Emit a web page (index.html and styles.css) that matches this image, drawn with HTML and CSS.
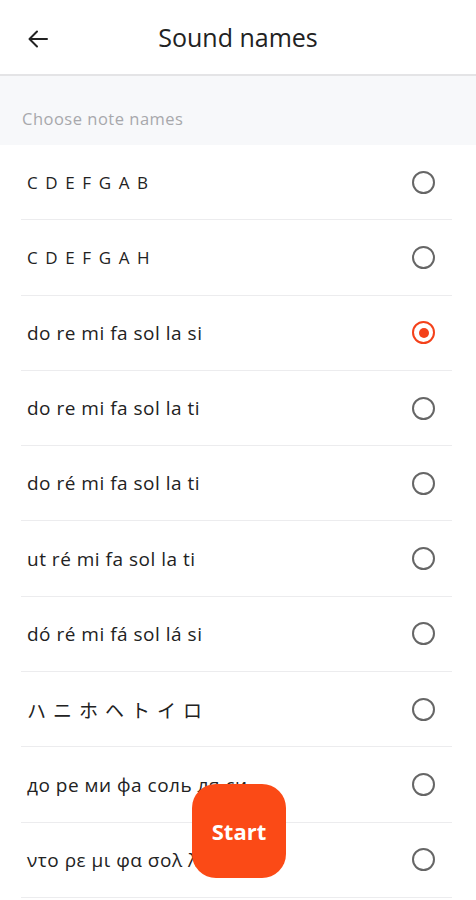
FILE: index.html
```html
<!DOCTYPE html>
<html lang="en">
<head>
<meta charset="utf-8">
<title>Sound names</title>
<link rel="stylesheet" href="styles.css">
</head>
<body>
<div class="screen">
  <header class="appbar">
    <button class="back" aria-label="Back">
      <svg width="24" height="24" viewBox="0 0 24 24"><path d="M21 12H4M11 4.5L3.5 12L11 19.5" fill="none" stroke="#222" stroke-width="2" stroke-linecap="round" stroke-linejoin="round"/></svg>
    </button>
    <h1 class="title">Sound names</h1>
  </header>
  <div class="section">Choose note names</div>
  <ul class="list">
    <li class="row"><span class="label spaced">C D E F G A B</span><span class="radio"></span></li>
    <li class="row"><span class="label spaced">C D E F G A H</span><span class="radio"></span></li>
    <li class="row"><span class="label">do re mi fa sol la si</span><span class="radio on"></span></li>
    <li class="row"><span class="label">do re mi fa sol la ti</span><span class="radio"></span></li>
    <li class="row"><span class="label">do ré mi fa sol la ti</span><span class="radio"></span></li>
    <li class="row"><span class="label">ut ré mi fa sol la ti</span><span class="radio"></span></li>
    <li class="row"><span class="label">dó ré mi fá sol lá si</span><span class="radio"></span></li>
    <li class="row"><span class="label jp">ハニホヘトイロ</span><span class="radio"></span></li>
    <li class="row"><span class="label">до ре ми фа соль ля си</span><span class="radio"></span></li>
    <li class="row"><span class="label">ντο ρε μι φα σολ λα σι</span><span class="radio"></span></li>
  </ul>
  <button class="fab">Start</button>
</div>
</body>
</html>
```
FILE: styles.css
```css
* { box-sizing: border-box; }
html, body { margin: 0; padding: 0; background: #fff; }
body { font-family: "Open Sans", "Noto Sans", "Noto Sans CJK JP", sans-serif; color: #222; }
.screen { position: relative; width: 476px; height: 900px; overflow: hidden; background: #fff; }
.appbar { height: 76px; display: flex; align-items: center; position: relative; border-bottom: 2px solid #e4e4e6; }
.back { position: absolute; left: 25px; top: 26px; width: 26px; height: 26px; padding: 0; border: 0; background: none; display: flex; align-items: center; justify-content: center; }
.title { flex: 1; margin: 0; text-align: center; font-size: 25px; font-weight: 400; color: #222; padding-bottom: 0; }
.section { height: 69px; background: #f7f8fa; color: #a8a8ac; font-size: 16.5px; letter-spacing: 0.5px; padding: 0 22px; display: flex; align-items: center; padding-top: 16px; }
.list { list-style: none; margin: 0 24px 0 21px; padding: 0; }
.row { height: 75.3px; border-bottom: 1px solid #ececee; display: flex; align-items: center; justify-content: space-between; padding: 0 17px 0 6px; }
.label { font-size: 19px; color: #222; letter-spacing: 0.5px; }
.label.spaced { letter-spacing: 1.6px; font-size: 17px; }
.label.jp { font-family: "Noto Sans CJK JP", sans-serif; font-size: 19px; letter-spacing: 7px; }
.radio { width: 23px; height: 23px; border-radius: 50%; border: 2px solid #666; flex: none; position: relative; }
.radio.on { border-color: #f4411a; }
.radio.on::after { content: ""; position: absolute; left: 4.5px; top: 4.5px; width: 10px; height: 10px; border-radius: 50%; background: #f4411a; }
.fab { position: absolute; left: 192px; top: 784px; width: 94px; height: 94px; border-radius: 24px; border: 0; background: #fb4a16; color: #fff; font-family: "Open Sans", sans-serif; font-weight: 700; font-size: 22px; padding: 0; }
```
